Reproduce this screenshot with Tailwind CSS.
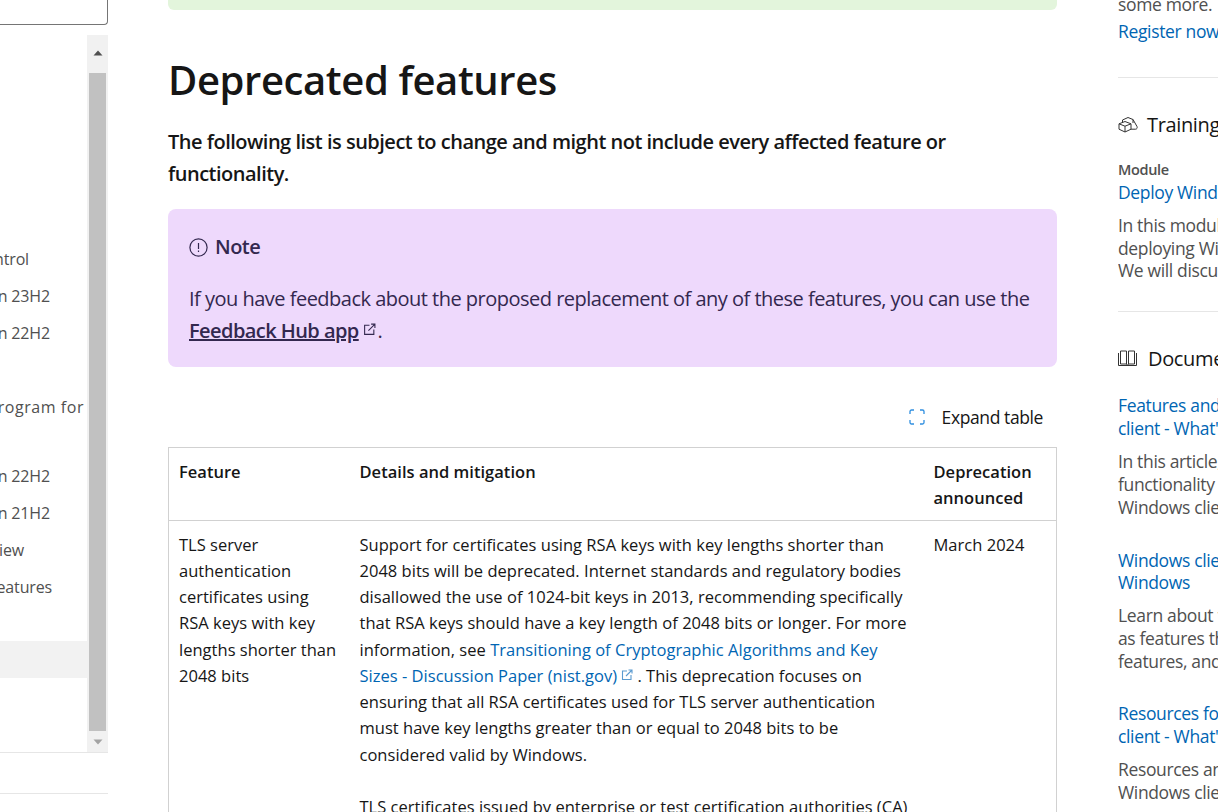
<!DOCTYPE html>
<html lang="en">
<head>
    <meta charset="UTF-8">
    <title>Deprecated features</title>
    <script src="https://cdn.jsdelivr.net/npm/@tailwindcss/browser@4"></script>
</head>
<body class="h-[812px] overflow-hidden bg-white font-['Open_Sans',sans-serif] text-[#161616]">
<div class="flex h-[812px] overflow-hidden">

    <!-- left nav, scrolled off the edge -->
    <aside class="w-[108px] shrink-0 overflow-hidden">
        <div class="h-[25px] border-r border-b border-[#757575] rounded-br-sm"></div>
        <div class="flex h-[718px] mt-[10px] border-b border-[#e6e6e6]">
            <div class="w-[87px] shrink-0 overflow-hidden text-[16px] text-[#505050] tracking-[-0.15px] pt-[205px]">
                <div class="flex justify-end h-[37px] items-center pr-[58px] whitespace-nowrap">User Account Control</div>
                <div class="flex justify-end h-[37px] items-center pr-[37px] whitespace-nowrap">Windows 11, version 23H2</div>
                <div class="flex justify-end h-[37px] items-center pr-[37px] whitespace-nowrap">Windows 11, version 22H2</div>
                <div class="h-[37px]"></div>
                <div class="flex justify-end h-[69px] items-start pt-[7px] pr-[3px] whitespace-nowrap tracking-[0.55px]">Windows Insider program for</div>
                <div class="flex justify-end h-[37px] items-center pr-[37px] whitespace-nowrap">Windows 10, version 22H2</div>
                <div class="flex justify-end h-[37px] items-center pr-[37px] whitespace-nowrap">Windows 10, version 21H2</div>
                <div class="flex justify-end h-[37px] items-center pr-[63px] whitespace-nowrap">Overview</div>
                <div class="flex justify-end h-[37px] items-center pr-[35px] whitespace-nowrap">Removed features</div>
                <div class="h-[36px]"></div>
                <div class="h-[37px] bg-[#f2f2f2]"></div>
            </div>
            <div class="w-[21px] shrink-0 bg-[#f1f1f1] flex flex-col items-center">
                <div class="h-[38px] w-full flex items-center justify-center pb-[2px]">
                    <svg width="10" height="6" viewBox="0 0 10 6"><path d="M5 0.5 L9.5 5.5 L0.5 5.5 Z" fill="#505050"/></svg>
                </div>
                <div class="w-[17px] h-[658px] bg-[#c1c1c1]"></div>
                <div class="flex-1 w-full flex items-center justify-center">
                    <svg width="10" height="6" viewBox="0 0 10 6"><path d="M0.5 0.5 L9.5 0.5 L5 5.5 Z" fill="#a3a3a3"/></svg>
                </div>
            </div>
        </div>
        <div class="h-[41px] border-b border-[#e6e6e6]"></div>
    </aside>

    <!-- article -->
    <main class="w-[889px] ml-[60px] shrink-0">
        <div class="h-[10px] bg-[#e3f5dc] rounded-b-md"></div>
        <h1 class="mt-[41px] text-[40px] leading-[58px] font-semibold tracking-[-0.4px] whitespace-nowrap">Deprecated features</h1>
        <p class="mt-[17px] text-[20px] leading-[32px] font-semibold tracking-[-0.5px] whitespace-nowrap">The following list is subject to change and might not include every affected feature or<br>functionality.</p>

        <div class="mt-[19px] h-[158px] bg-[#eed9fc] rounded-lg px-[21px] pt-[22px] text-[#33284f]">
            <p class="flex items-center gap-[7px] text-[20px] leading-[32px] font-semibold tracking-[-0.5px] h-[32px]">
                <svg width="19" height="19" viewBox="0 0 19 19" fill="none" stroke="#33284f" stroke-width="1.2"><circle cx="9.5" cy="9.5" r="8.6"/><path d="M9.5 5v6M9.5 12.6v1.4"/></svg>
                Note
            </p>
            <p class="mt-[20px] text-[20px] leading-[32px] tracking-[-0.51px] whitespace-nowrap">If you have feedback about the proposed replacement of any of these features, you can use the<br><a class="font-semibold underline tracking-[-0.56px]">Feedback Hub app</a><svg class="inline-block ml-[4px] mr-[-3px] mb-[6px]" width="13" height="13" viewBox="0 0 12 12" fill="none" stroke="#33284f" stroke-width="1"><path d="M6 2H1.5V10.5H10V6M5 7L11 1M7.5 1H11V4.5"/></svg> .</p>
        </div>

        <div class="flex justify-end items-center h-[32px] mt-[34px] pr-[14px] text-[17.5px] tracking-[-0.4px]">
            <svg class="mr-[17px]" width="16" height="16" viewBox="0 0 16 16" fill="none" stroke="#2f8fe0" stroke-width="1.3"><path d="M1 5V2.5A1.5 1.5 0 0 1 2.5 1H5M11 1H13.5A1.5 1.5 0 0 1 15 2.5V5M15 11V13.5A1.5 1.5 0 0 1 13.5 15H11M5 15H2.5A1.5 1.5 0 0 1 1 13.5V11"/></svg>
            Expand table
        </div>

        <table class="mt-[14px] w-[889px] table-fixed border-collapse border border-[#d1d1d1] text-[16.5px] leading-[26.25px] tracking-[0.02px]">
            <colgroup><col class="w-[181px]"><col class="w-[574px]"><col></colgroup>
            <thead>
                <tr class="border-b border-[#d1d1d1] text-left align-top">
                    <th class="pl-[10px] pt-[11px] pb-[8px] font-semibold">Feature</th>
                    <th class="pl-[10px] pt-[11px] pb-[8px] font-semibold">Details and mitigation</th>
                    <th class="pl-[10px] pt-[11px] pb-[8px] font-semibold">Deprecation<br>announced</th>
                </tr>
            </thead>
            <tbody>
                <tr class="align-top">
                    <td class="pl-[10px] pt-[11px] whitespace-nowrap">TLS server<br>authentication<br>certificates using<br>RSA keys with key<br>lengths shorter than<br>2048 bits</td>
                    <td class="pl-[10px] pt-[11px] whitespace-nowrap">
                        Support for certificates using RSA keys with key lengths shorter than<br>
                        2048 bits will be deprecated. Internet standards and regulatory bodies<br>
                        disallowed the use of 1024-bit keys in 2013, recommending specifically<br>
                        that RSA keys should have a key length of 2048 bits or longer. For more<br>
                        information, see <a class="text-[#0065b3]">Transitioning of Cryptographic Algorithms and Key<br>Sizes - Discussion Paper (nist.gov)</a><svg class="inline-block ml-[4px] mb-[5px]" width="12" height="12" viewBox="0 0 12 12" fill="none" stroke="#5b9bd0" stroke-width="1.1"><path d="M6 2H1.5V10.5H10V6M5 7L11 1M7.5 1H11V4.5"/></svg> . This deprecation focuses on<br>
                        ensuring that all RSA certificates used for TLS server authentication<br>
                        must have key lengths greater than or equal to 2048 bits to be<br>
                        considered valid by Windows.
                        <div class="mt-[26px]">TLS certificates issued by enterprise or test certification authorities (CA)</div>
                    </td>
                    <td class="pl-[10px] pt-[11px] whitespace-nowrap">March 2024</td>
                </tr>
            </tbody>
        </table>
    </main>

    <!-- right rail, cut off by the window -->
    <aside class="ml-[61px] w-[100px] shrink-0 overflow-hidden whitespace-nowrap text-[17.5px] leading-[23px] tracking-[-0.35px] text-[#505050]">
        <div class="mt-[-7px]">some more.</div>
        <a class="block mt-[4px] text-[#0065b3] font-medium">Register now</a>
        <div class="mt-[34px] border-t border-[#e6e6e6]"></div>

        <div class="mt-[33px] flex items-center gap-[9px] h-[26px] text-[20px] font-medium text-[#161616]">
            <svg class="shrink-0" width="20" height="17" viewBox="0 0 20 17" fill="none" stroke="#333" stroke-width="1"><path d="M7 5.5L13 7.8V13.2L7 16L1 13.2V7.8ZM1 7.8L7 10.2L13 7.8M7 10.2V16M4.5 6.5V4L10 1.5L15 3.5V7M15 3.5L19 10.5C19.6 12 18.8 13.2 17.5 13.2H13"/></svg>
            Training
        </div>
        <div class="mt-[24px] text-[14.5px] leading-[18px] font-semibold">Module</div>
        <a class="block mt-[2px] text-[#0065b3] font-medium">Deploy Windows client</a>
        <div class="mt-[10px] leading-[22.5px]">In this module, you will<br>deploying Windows client<br>We will discuss the</div>
        <div class="mt-[29px] border-t border-[#e6e6e6]"></div>

        <div class="mt-[34px] flex items-center gap-[11px] h-[26px] text-[20px] font-medium text-[#161616]">
            <svg class="shrink-0" width="19" height="17" viewBox="0 0 19 17" fill="none" stroke="#333" stroke-width="1"><path d="M2.5 1H8.5V14H2.5ZM10.5 1H16.5V14H10.5ZM0.5 3V15.5H18.5V3M8.5 14L9.5 15.5L10.5 14"/></svg>
            Documentation
        </div>
        <a class="block mt-[22px] text-[#0065b3] font-medium">Features and functionality<br>client - What's new</a>
        <div class="mt-[10px]">In this article, you will<br>functionality that was<br>Windows client</div>
        <a class="block mt-[30px] text-[#0065b3] font-medium leading-[22.5px]">Windows client<br>Windows</a>
        <div class="mt-[10px]">Learn about the<br>as features that<br>features, and</div>
        <a class="block mt-[29px] text-[#0065b3] font-medium">Resources for Windows<br>client - What's new</a>
        <div class="mt-[10px]">Resources and<br>Windows client</div>
    </aside>
</div>
</body>
</html>
